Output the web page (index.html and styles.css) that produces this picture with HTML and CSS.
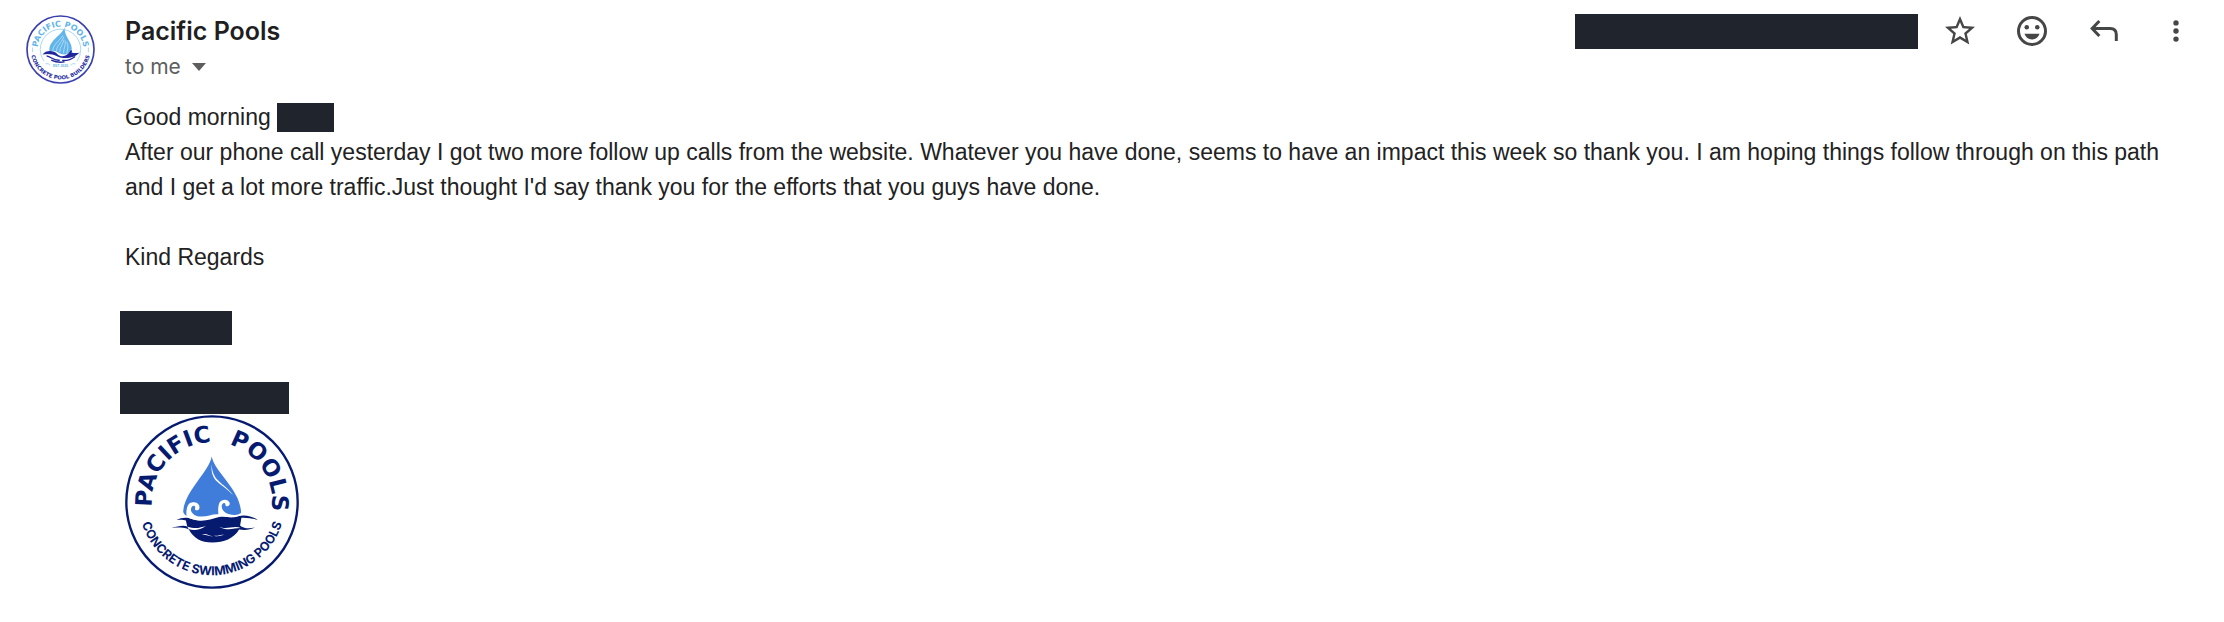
FILE: index.html
```
<!DOCTYPE html>
<html lang="en">
<head>
  <meta charset="UTF-8">
  <meta name="viewport" content="width=device-width, initial-scale=1.0">
  <title>Pacific Pools</title>
  <link rel="stylesheet" href="styles.css">
</head>
<body>
  <article class="message">
    <svg class="avatar" viewBox="17 14 208 208" role="img" aria-label="Pacific Pools avatar">
      <defs>
        <path id="avatarTop" d="M52 118 A69 69 0 0 1 190 118"/>
        <path id="avatarBottom" d="M31 118 A90 90 0 0 0 211 118"/>
      </defs>
      <circle cx="121" cy="118" r="101" fill="#fff" stroke="#3a3fae" stroke-width="5"/>
      <circle cx="121" cy="118" r="61" fill="none" stroke="#7cc4ee" stroke-width="2" stroke-dasharray="268 116" stroke-dashoffset="-154"/>
      <g class="avatar-top">
        <text><textPath href="#avatarTop" startOffset="50%">PACIFIC POOLS</textPath></text>
      </g>
      <g class="avatar-bottom">
        <text><textPath href="#avatarBottom" startOffset="50%">CONCRETE POOL BUILDERS</textPath></text>
      </g>
      <path d="M37 112V126M205 112V126" stroke="#7cc4ee" stroke-width="2"/>
      <!-- drop -->
      <path d="M133 52C125 77 83 91 88 124C94 120 107 121 115 128C130 137 145 132 154 124C161 98 132 83 133 52Z" fill="#62b5ea"/>
      <path d="M128 75C120 91 98 103 98 121M131 80C125 97 109 106 109 122M132 88C129 102 118 111 119 126M135 91C138 105 130 113 130 129M140 95C146 107 142 118 140 130" fill="none" stroke="#d2edfb" stroke-width="2"/>
      <!-- waves -->
      <path d="M67 133C77 119 101 120 112 132C126 145 144 136 151 121C156 119 157 124 154 127C162 129 173 130 179 126C162 145 133 148 112 139C96 131 82 130 67 133Z" fill="#20279d"/>
      <path d="M79 137C94 139 99 153 119 150M126 151C143 152 154 148 165 139M93 150C104 155 115 159 133 155" fill="none" stroke="#20279d" stroke-width="4"/>
      <path d="M76 161H85L90 166M166 161H157L152 166" fill="none" stroke="#7cc4ee" stroke-width="2"/>
      <text class="avatar-est" x="121" y="171">EST. 2020</text>
    </svg>

    <div class="content">
      <header class="header">
        <div class="sender">
          <h1 class="name">Pacific Pools</h1>
          <button class="recipient" type="button">
            to me
            <svg width="14" height="8" viewBox="0 0 14 8" aria-hidden="true"><path d="M0 0H14L7 8Z" fill="#5e5e5e"/></svg>
          </button>
        </div>

        <div class="actions">
          <span class="redacted redacted-date"></span>
          <button class="icon-btn" type="button" aria-label="Star">
            <svg viewBox="0 0 24 24"><path d="M22 9.24l-7.19-.62L12 2 9.19 8.63 2 9.24l5.46 4.73L5.82 21 12 17.27 18.18 21l-1.63-7.03L22 9.24zM12 15.4l-3.76 2.27 1-4.28-3.32-2.88 4.38-.38L12 6.1l1.71 4.04 4.38.38-3.32 2.88 1 4.28L12 15.4z"/></svg>
          </button>
          <button class="icon-btn" type="button" aria-label="Add reaction">
            <svg viewBox="0 0 24 24"><path fill-rule="evenodd" d="M12 2a10 10 0 1 0 0 20a10 10 0 0 0 0-20zM12 4a8 8 0 1 1 0 16a8 8 0 0 1 0-16z"/><circle cx="8.5" cy="9.5" r="1.5"/><circle cx="15.5" cy="9.5" r="1.5"/><path d="M7 13.8H17C16.3 16.1 14.4 17.6 12 17.6S7.7 16.1 7 13.8Z"/></svg>
          </button>
          <button class="icon-btn" type="button" aria-label="Reply">
            <svg viewBox="0 0 24 24"><path d="M8.9 5.3L4.1 10.3L8.9 15.3M4.1 10.3H16.2Q20.2 10.3 20.2 14.3V18.7" fill="none" stroke="#444746" stroke-width="2"/></svg>
          </button>
          <button class="icon-btn" type="button" aria-label="More">
            <svg viewBox="0 0 24 24"><circle cx="12" cy="6.6" r="1.8"/><circle cx="12" cy="12" r="1.8"/><circle cx="12" cy="17.4" r="1.8"/></svg>
          </button>
        </div>
      </header>

      <div class="body">
        <p class="greeting">Good morning <span class="redacted redacted-name"></span></p>
        <p>After our phone call yesterday I got two more follow up calls from the website. Whatever you have done, seems to have an impact this week so thank you. I am hoping things follow through on this path and I get a lot more traffic.Just thought I'd say thank you for the efforts that you guys have done.</p>
        <br>
        <p>Kind Regards</p>
        <br>
        <div class="signature-line"><span class="redacted redacted-signature"></span></div>
        <br>
        <div class="signature-line"><span class="redacted redacted-phone"></span></div>

        <svg class="logo" viewBox="45 45 520 520" role="img" aria-label="Pacific Pools logo">
          <defs>
            <path id="logoFirst" d="M127 330 A178 178 0 0 1 314 127"/>
            <path id="logoSecond" d="M358 134 A178 178 0 0 1 483 330"/>
            <path id="logoBottom" d="M86 305 A219 219 0 0 0 524 305"/>
          </defs>
          <circle cx="305" cy="305" r="256" fill="#fff" stroke="#061b70" stroke-width="7"/>
          <g class="logo-top">
            <text><textPath href="#logoFirst" startOffset="50%">PACIFIC</textPath></text>
            <text><textPath href="#logoSecond" startOffset="50%">POOLS</textPath></text>
          </g>
          <g class="logo-bottom">
            <text><textPath href="#logoBottom" startOffset="50%">CONCRETE SWIMMING POOLS</textPath></text>
          </g>
          <!-- drop -->
          <path d="M304 169C298 213 221 274 219 335C225 352 250 358 280 355C310 348 330 335 352 346C365 351 382 349 392 339C392 270 313 216 304 169Z" fill="#407ddb"/>
          <path d="M304 192C306 233 326 242 343 258C355 269 362 275 368 285C351 266 333 256 320 244C307 231 302 216 304 192Z" fill="#fff"/>
          <!-- water -->
          <path d="M199 358C215 350 235 350 249 357C278 366 300 357 326 350C345 346 361 355 385 347C407 342 428 350 442 358C424 354 409 351 393 352L389 375C397 383 414 386 433 381C420 388 403 390 386 387C370 414 341 426 306 426C272 426 249 412 236 387C219 379 204 385 184 380C203 380 216 372 231 378L227 360C217 356 208 359 199 358Z" fill="#061b70"/>
          <!-- wave crests -->
          <path d="M229 350C226 322 234 306 248 306C262 305 270 315 267 325C264 332 254 331 254 325C257 318 252 314 246 318C236 328 246 345 265 348C290 351 305 340 324 342C323 328 323 316 328 306C336 294 354 296 358 308C359 317 348 321 345 314C346 308 340 306 336 311C330 322 338 336 354 341C370 345 382 345 392 338L392 344C375 354 355 351 340 347C320 345 300 358 270 359C250 360 238 355 229 350Z" fill="#fff"/>
          <path d="M231 378C254 387 271 382 287 376C270 390 249 391 235 386ZM326 379C349 389 371 374 391 383C373 382 353 394 326 379ZM274 402C292 395 297 412 313 405C302 411 289 402 274 402ZM310 405C325 409 330 399 342 404C330 403 325 412 310 405Z" fill="#fff"/>
        </svg>
      </div>
    </div>
  </article>
</body>
</html>
```
FILE: styles.css
```
body {
  margin: 0;
  background-color: #fff;
  color: #222;
  font-family: "Liberation Sans", Arial, sans-serif;
}

.message {
  display: flex;
  gap: 30px;
  padding: 13px 30px 24px 26px;
}

.avatar {
  flex: none;
  width: 69px;
  height: 69px;
  margin-top: 2px;
}

.content {
  flex: 1;
  min-width: 0;
}

/* Sender and actions */
.header {
  display: flex;
  justify-content: space-between;
  align-items: flex-start;
}

.name {
  margin: 0;
  color: #1f1f1f;
  font-family: Inter, sans-serif;
  font-size: 25px;
  font-weight: 600;
  line-height: 36px;
}

.recipient {
  display: flex;
  align-items: center;
  gap: 11px;
  padding: 0;
  border: none;
  background: none;
  color: #5e5e5e;
  font-family: Inter, sans-serif;
  font-size: 21px;
  line-height: 36px;
  cursor: pointer;
}

.actions {
  display: flex;
  align-items: center;
  gap: 36px;
}

.icon-btn {
  width: 36px;
  height: 36px;
  padding: 0;
  border: none;
  background: none;
  cursor: pointer;
}

.icon-btn svg {
  display: block;
  fill: #444746;
}

/* Redacted details */
.redacted {
  display: inline-block;
  background-color: #20252d;
}

.redacted-date {
  width: 343px;
  height: 35px;
  margin-right: -12px;
}

.redacted-name {
  width: 57px;
  height: 29px;
}

.redacted-signature {
  width: 112px;
  height: 34px;
}

.redacted-phone {
  width: 169px;
  height: 32px;
}

/* Message text */
.body {
  margin-top: 15px;
  font-size: 23px;
  line-height: 35px;
}

.body p {
  margin: 0;
}

.greeting {
  display: flex;
  align-items: center;
  gap: 6px;
}

.signature-line {
  display: flex;
  align-items: center;
  height: 35px;
  margin-left: -5px;
}

.logo {
  display: block;
  width: 174px;
  height: 174px;
}

/* Logo lettering */
.logo-top {
  fill: #061b70;
  font-family: "DejaVu Sans", sans-serif;
  font-size: 68px;
  font-weight: 700;
  text-anchor: middle;
}

.logo-bottom {
  fill: #061b70;
  font-family: Inter, sans-serif;
  font-size: 37px;
  font-weight: 700;
  text-anchor: middle;
}

.avatar-top {
  fill: #62b5ea;
  font-family: "DejaVu Sans", sans-serif;
  font-size: 24px;
  font-weight: 700;
  text-anchor: middle;
}

.avatar-bottom {
  fill: #20279d;
  font-family: "DejaVu Sans", sans-serif;
  font-size: 16px;
  font-weight: 700;
  text-anchor: middle;
}

.avatar-est {
  fill: #62b5ea;
  font-size: 10px;
  font-weight: 700;
  text-anchor: middle;
}
```
